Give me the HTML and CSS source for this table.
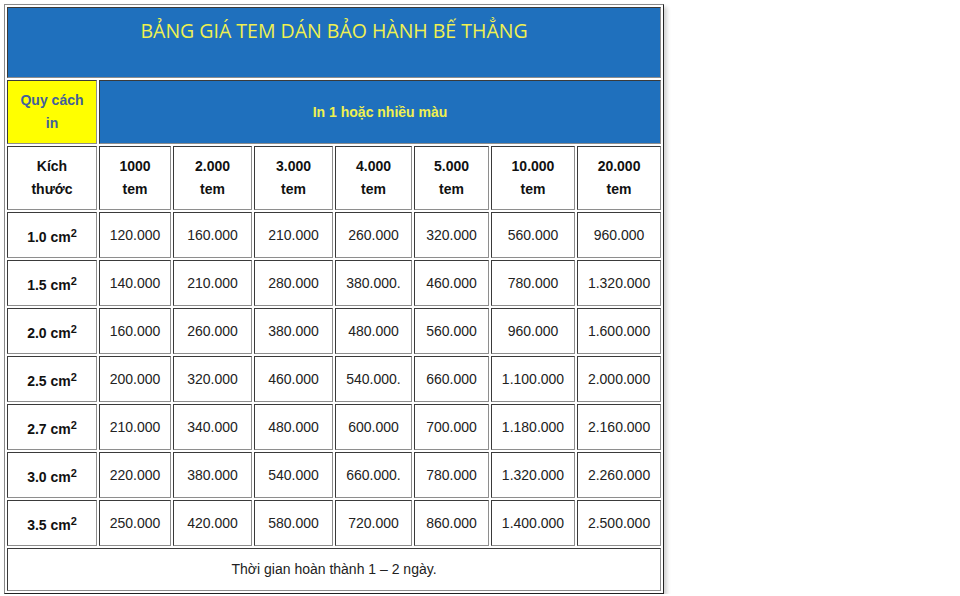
FILE: index.html
```html
<!DOCTYPE html>
<html lang="vi">
<head>
<meta charset="utf-8">
<title>Bảng giá tem dán bảo hành bế thẳng</title>
<link rel="stylesheet" href="styles.css">
</head>
<body>
<table class="price">
  <colgroup>
    <col class="c1"><col class="c2"><col class="c3"><col class="c4"><col class="c5"><col class="c6"><col class="c7"><col class="c8">
  </colgroup>
  <tr class="r-title"><td colspan="8" class="title">BẢNG GIÁ TEM DÁN BẢO HÀNH BẾ THẲNG</td></tr>
  <tr class="r-head">
    <td class="spec">Quy cách<br>in</td>
    <td colspan="7" class="color">In 1 hoặc nhiều màu</td>
  </tr>
  <tr class="r-head">
    <td class="hd">Kích<br>thước</td>
    <td class="hd">1000<br>tem</td>
    <td class="hd">2.000<br>tem</td>
    <td class="hd">3.000<br>tem</td>
    <td class="hd">4.000<br>tem</td>
    <td class="hd">5.000<br>tem</td>
    <td class="hd">10.000<br>tem</td>
    <td class="hd">20.000<br>tem</td>
  </tr>
  <tr class="r-data"><td class="size">1.0 cm<sup>2</sup></td><td>120.000</td><td>160.000</td><td>210.000</td><td>260.000</td><td>320.000</td><td>560.000</td><td>960.000</td></tr>
  <tr class="r-data"><td class="size">1.5 cm<sup>2</sup></td><td>140.000</td><td>210.000</td><td>280.000</td><td>380.000.</td><td>460.000</td><td>780.000</td><td>1.320.000</td></tr>
  <tr class="r-data"><td class="size">2.0 cm<sup>2</sup></td><td>160.000</td><td>260.000</td><td>380.000</td><td>480.000</td><td>560.000</td><td>960.000</td><td>1.600.000</td></tr>
  <tr class="r-data"><td class="size">2.5 cm<sup>2</sup></td><td>200.000</td><td>320.000</td><td>460.000</td><td>540.000.</td><td>660.000</td><td>1.100.000</td><td>2.000.000</td></tr>
  <tr class="r-data"><td class="size">2.7 cm<sup>2</sup></td><td>210.000</td><td>340.000</td><td>480.000</td><td>600.000</td><td>700.000</td><td>1.180.000</td><td>2.160.000</td></tr>
  <tr class="r-data"><td class="size">3.0 cm<sup>2</sup></td><td>220.000</td><td>380.000</td><td>540.000</td><td>660.000.</td><td>780.000</td><td>1.320.000</td><td>2.260.000</td></tr>
  <tr class="r-data"><td class="size">3.5 cm<sup>2</sup></td><td>250.000</td><td>420.000</td><td>580.000</td><td>720.000</td><td>860.000</td><td>1.400.000</td><td>2.500.000</td></tr>
  <tr class="r-foot"><td colspan="8" class="foot">Thời gian hoàn thành 1 – 2 ngày.</td></tr>
</table>
</body>
</html>
```
FILE: styles.css
```css
html, body {
  margin: 0;
  padding: 0;
  background: #ffffff;
}
body {
  padding: 4px 0 0 4px;
  font-family: "Liberation Sans", Arial, sans-serif;
  font-size: 14px;
  color: #222222;
}
.price {
  table-layout: fixed;
  width: 660px;
  border-collapse: separate;
  border-spacing: 2px;
  border: 1px solid;
  border-color: #8a8a8a #222222 #222222 #8a8a8a;
  box-shadow: 3px 3px 4px rgba(0, 0, 0, 0.18);
}
.c1 { width: 90px; }
.c2 { width: 72px; }
.c3 { width: 79px; }
.c4 { width: 79px; }
.c5 { width: 77px; }
.c6 { width: 75px; }
.c7 { width: 84px; }
.c8 { width: 84px; }
.price td {
  box-sizing: border-box;
  padding: 0 0 1px;
  border: 1px solid;
  border-color: #3a3a3a #8e8e8e #8e8e8e #3a3a3a;
  text-align: center;
  vertical-align: middle;
}
.r-title td { height: 71px; }
.r-head td { height: 64px; }
.r-data td { height: 46px; }
.r-foot td { height: 43px; }
.price td.title {
  background: #1f70bd;
  color: #f0f050;
  font-family: "Open Sans", "Noto Sans", sans-serif;
  font-size: 19.5px;
  vertical-align: top;
  padding-top: 9px;
}
.price td.spec {
  background: #ffff00;
  color: #41609c;
  font-weight: bold;
  line-height: 23px;
}
.price td.color {
  background: #1f70bd;
  color: #f0f050;
  font-weight: bold;
}
.price td.hd {
  font-weight: bold;
  color: #111111;
  line-height: 23px;
}
.price td.size {
  font-weight: bold;
  color: #111111;
  padding-top: 4px;
}
.size sup {
  font-size: 11px;
  line-height: 0;
  vertical-align: 5px;
}
.price td.foot {
  color: #222222;
}
```
